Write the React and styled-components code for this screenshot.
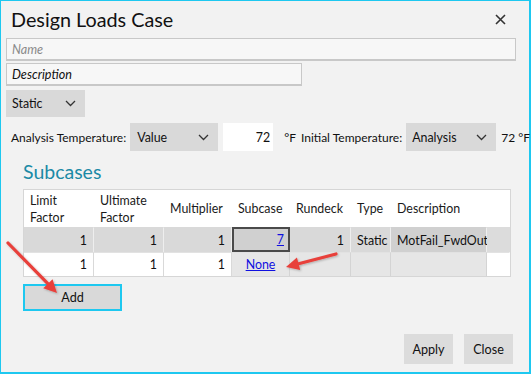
import React from "react";
import styled, { createGlobalStyle } from "styled-components";

const Global = createGlobalStyle`
  html, body { margin: 0; padding: 0; background: #ffffff; }
  * { box-sizing: border-box; }
`;

const font = `Lato, "Noto Sans", sans-serif`;

const Window = styled.div`
  position: relative;
  width: 531px;
  height: 374px;
  border: 1px solid #1ec8f0;
  border-right-width: 2px;
  border-bottom-width: 2px;
  background: #f2f2f2;
  font-family: ${font};
  font-size: 12.4px;
  color: #111;
  padding: 0 12px 0 5px;
  display: flex;
  flex-direction: column;
`;

const TitleBar = styled.div`
  height: 37px;
  display: flex;
  align-items: center;
  justify-content: space-between;
  padding: 0 8px 2px 5px;
`;

const Title = styled.div`
  font-size: 19.8px;
  color: #111;
`;

const CloseX = styled.div`
  width: 11px;
  height: 11px;
  margin-right: 3px;
`;

const TextBox = styled.div`
  width: ${p => p.$w || "510px"};
  height: 23px;
  margin-top: ${p => p.$mt || "0"};
  border: 1px solid #c8c8c8;
  border-width: 1px 1px 2px 1px;
  background: #f7f7f7;
  display: flex;
  align-items: center;
  padding-left: 5px;
  font-style: italic;
  font-size: 12.6px;
  color: ${p => (p.$placeholder ? "#8a8a8a" : "#111")};
`;

const Select = styled.div`
  width: ${p => p.$w};
  height: ${p => p.$h || "28px"};
  background: #d9d9d9;
  display: flex;
  align-items: center;
  justify-content: space-between;
  padding: 0 9px 0 ${p => p.$pl || "6px"};
  flex-shrink: 0;
  font-size: 12.4px;
`;

const StaticSelect = styled(Select)`
  margin-top: 4px;
`;

const TempRow = styled.div`
  margin-top: 6px;
  height: 28px;
  display: flex;
  align-items: center;
  padding-left: 5px;
  white-space: nowrap;
  font-size: 12px;
`;

const Label = styled.span`
  margin-left: ${p => p.$ml || "0"};
  margin-right: ${p => p.$mr || "0"};
`;

const NumBox = styled.div`
  width: 50px;
  height: 28px;
  flex-shrink: 0;
  background: #ffffff;
  margin-left: 5px;
  display: flex;
  align-items: center;
  justify-content: flex-end;
  padding-right: 3px;
  font-size: 12.4px;
`;

const Indent = styled.div`
  padding-left: 17px;
  display: flex;
  flex-direction: column;
`;

const SectionTitle = styled.div`
  margin-top: 8px;
  font-size: 19.5px;
  color: #1b8aa6;
  height: 30px;
  line-height: 26px;
`;

const Table = styled.div`
  width: 488px;
  border: 1px solid #d6d6d6;
  display: grid;
  grid-template-columns: 70px 70px 68px 58px 61px 40px 96px 23px;
  background: #fff;
`;

const HeadCell = styled.div`
  height: 37px;
  background: #fff;
  display: flex;
  align-items: center;
  padding-left: 6px;
  line-height: 17px;
  color: #1a1a1a;
`;

const Cell = styled.div`
  height: ${p => p.$h};
  background: ${p => p.$bg};
  border-right: 1px solid ${p => p.$line};
  border-top: 1px solid ${p => p.$top || "transparent"};
  display: flex;
  align-items: center;
  justify-content: ${p => (p.$left ? "flex-start" : p.$center ? "center" : "flex-end")};
  padding: 0 6px;
  white-space: nowrap;
`;

const ActiveCell = styled(Cell)`
  border: 2px solid #4a4a4a;
  background: #d0d0d0;
  padding-right: 4px;
`;

const Link = styled.a`
  color: #1010e0;
  text-decoration: underline;
  cursor: pointer;
`;

const AddButton = styled.button`
  margin-top: 7px;
  width: 99px;
  height: 27px;
  background: #d9d9d9;
  border: 2px solid #1ec8f0;
  font-family: ${font};
  font-size: 12.6px;
  color: #111;
  padding: 0;
`;

const Footer = styled.div`
  margin-top: auto;
  margin-bottom: 8px;
  display: flex;
  justify-content: flex-end;
  gap: 11px;
  padding-right: 4px;
`;

const Button = styled.button`
  width: 49px;
  height: 30px;
  background: #dcdcdc;
  border: none;
  font-family: ${font};
  font-size: 12.6px;
  color: #111;
  padding: 0;
`;

const Overlay = styled.svg`
  position: absolute;
  left: -1px;
  top: -1px;
  pointer-events: none;
`;

const Chevron = () => (
  <svg width="11" height="7" viewBox="0 0 11 7">
    <path d="M1 1 L5.5 5.5 L10 1" fill="none" stroke="#333" strokeWidth="1.3" />
  </svg>
);

const headers = [
  ["Limit", "Factor"],
  ["Ultimate", "Factor"],
  ["Multiplier"],
  ["Subcase"],
  ["Rundeck"],
  ["Type"],
  ["Description"],
  [],
];

const Arrow = ({ x1, y1, x2, y2 }) => {
  const dx = x2 - x1;
  const dy = y2 - y1;
  const len = Math.sqrt(dx * dx + dy * dy);
  const ux = dx / len;
  const uy = dy / len;
  const hl = 13;
  const hw = 6.5;
  const bx = x2 - ux * hl;
  const by = y2 - uy * hl;
  const pts = `${x2},${y2} ${bx - uy * hw},${by + ux * hw} ${bx + uy * hw},${by - ux * hw}`;
  return (
    <g filter="url(#sh)">
      <line x1={x1} y1={y1} x2={bx + ux * 2} y2={by + uy * 2} stroke="#e8413b" strokeWidth="3.2" strokeLinecap="round" />
      <polygon points={pts} fill="#e8413b" />
    </g>
  );
};

export default function App() {
  const r1 = { $h: "25px", $bg: "#d9d9d9", $line: "#eeeeee" };
  const r2w = { $h: "24px", $bg: "#ffffff", $line: "#d9d9d9", $top: "#e2e2e2" };
  const r2g = { $h: "24px", $bg: "#e6e6e6", $line: "#d4d4d4", $top: "#e2e2e2" };
  return (
    <>
      <Global />
      <Window>
        <TitleBar>
          <Title>Design Loads Case</Title>
          <CloseX>
            <svg width="11" height="11" viewBox="0 0 11 11">
              <path d="M1 1 L10 10 M10 1 L1 10" stroke="#333" strokeWidth="1.6" />
            </svg>
          </CloseX>
        </TitleBar>
        <TextBox $placeholder>Name</TextBox>
        <TextBox $w="296px" $mt="2px">Description</TextBox>
        <StaticSelect $w="79px" $h="27px">
          <span>Static</span>
          <Chevron />
        </StaticSelect>
        <TempRow>
          <Label $mr="4px">Analysis Temperature:</Label>
          <Select $w="88px" $pl="7px">
            <span>Value</span>
            <Chevron />
          </Select>
          <NumBox>72</NumBox>
          <Label $ml="11px">°F</Label>
          <Label $ml="5px" $mr="4px">Initial Temperature:</Label>
          <Select $w="90px" $pl="6px">
            <span>Analysis</span>
            <Chevron />
          </Select>
          <Label $ml="5px">72 °F</Label>
        </TempRow>
        <Indent>
          <SectionTitle>Subcases</SectionTitle>
          <Table>
            {headers.map((h, i) => (
              <HeadCell key={i}>
                <div>
                  {h.map((t, j) => (
                    <div key={j}>{t}</div>
                  ))}
                </div>
              </HeadCell>
            ))}
            <Cell {...r1}>1</Cell>
            <Cell {...r1}>1</Cell>
            <Cell {...r1}>1</Cell>
            <ActiveCell {...r1}>
              <Link>7</Link>
            </ActiveCell>
            <Cell {...r1}>1</Cell>
            <Cell {...r1} $left>Static</Cell>
            <Cell {...r1} $left $bg="#d0d0d0">MotFail_FwdOut</Cell>
            <Cell {...r1} $line="transparent" $bg="#dcdcdc" />
            <Cell {...r2w}>1</Cell>
            <Cell {...r2w}>1</Cell>
            <Cell {...r2w}>1</Cell>
            <Cell {...r2g} $center>
              <Link>None</Link>
            </Cell>
            <Cell {...r2g} />
            <Cell {...r2g} />
            <Cell {...r2g} />
            <Cell {...r2w} $line="transparent" />
          </Table>
          <AddButton>Add</AddButton>
        </Indent>
        <Footer>
          <Button>Apply</Button>
          <Button>Close</Button>
        </Footer>
        <Overlay width="531" height="374">
          <defs>
            <filter id="sh" x="-20%" y="-20%" width="140%" height="140%">
              <feDropShadow dx="1" dy="1" stdDeviation="1" floodColor="#000" floodOpacity="0.25" />
            </filter>
          </defs>
          <Arrow x1={8} y1={243} x2={57} y2={293} />
          <Arrow x1={336} y1={254} x2={286} y2={267} />
        </Overlay>
      </Window>
    </>
  );
}
